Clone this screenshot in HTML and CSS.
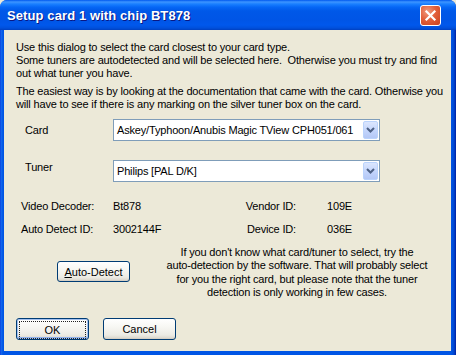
FILE: index.html
```html
<!DOCTYPE html>
<html lang="en">
<head>
  <meta charset="UTF-8" />
  <title>Setup card 1 with chip BT878</title>
  <link rel="stylesheet" href="styles.css">
</head>
<body>

  <div class="window">
    <!-- TITLE BAR -->
    <div class="titlebar">
      <span class="title">Setup card 1 with chip BT878</span>
      <button class="close" title="Close">
        <svg width="13" height="13" viewBox="0 0 13 13">
          <path d="M2.5 2.5 L10.5 10.5 M10.5 2.5 L2.5 10.5" stroke="#fff" stroke-width="2.2" stroke-linecap="square" fill="none"/>
        </svg>
      </button>
    </div>

    <!-- DIALOG BODY -->
    <div class="client">
      <p class="intro">Use this dialog to select the card closest to your card type.<br>Some tuners are autodetected and will be selected here.&nbsp; Otherwise you must try and find<br>out what tuner you have.</p>
      <p class="intro intro-second">The easiest way is by looking at the documentation that came with the card. Otherwise you<br>will have to see if there is any marking on the silver tuner box on the card.</p>

      <div class="field">
        <label class="field-label">Card</label>
        <div class="combo">
          <span class="combo-text">Askey/Typhoon/Anubis Magic TView CPH051/061</span>
          <span class="combo-arrow">
            <svg width="9" height="6" viewBox="0 0 9 6"><path d="M1 1 L4.5 4.5 L8 1" stroke="#4d6185" stroke-width="2" fill="none"/></svg>
          </span>
        </div>
      </div>

      <div class="field field-tuner">
        <label class="field-label">Tuner</label>
        <div class="combo">
          <span class="combo-text">Philips [PAL D/K]</span>
          <span class="combo-arrow">
            <svg width="9" height="6" viewBox="0 0 9 6"><path d="M1 1 L4.5 4.5 L8 1" stroke="#4d6185" stroke-width="2" fill="none"/></svg>
          </span>
        </div>
      </div>

      <div class="info">
        <span>Video Decoder:</span>
        <span>Bt878</span>
        <span class="info-key-right">Vendor ID:</span>
        <span class="info-val-right">109E</span>
        <span>Auto Detect ID:</span>
        <span>3002144F</span>
        <span class="info-key-right">Device ID:</span>
        <span class="info-val-right">036E</span>
      </div>

      <div class="detect">
        <button class="btn btn-detect"><u>A</u>uto-Detect</button>
        <p class="detect-text">If you don't know what card/tuner to select, try the<br>auto-detection by the software. That will probably select<br>for you the right card, but please note that the tuner<br>detection is only working in few cases.</p>
      </div>

      <div class="actions">
        <button class="btn btn-default"><span class="focus">OK</span></button>
        <button class="btn">Cancel</button>
      </div>
    </div>
  </div>

</body>
</html>
```

FILE: styles.css
```css
body {
  margin: 0;
  padding: 0;
  background: #ece9d8;
  font-family: "Liberation Sans", Arial, sans-serif;
  font-size: 11px;
}
.window {
  width: 456px;
  height: 355px;
  display: flex;
  flex-direction: column;
  box-sizing: border-box;
  padding: 0 5px 4px 4px;
  background: linear-gradient(to right, #0831d9 0, #166aee 1px, #0055e5 3px, #0055e5 451px, #0046d0 454px, #001ea0 456px);
  border-radius: 7px 7px 0 0;
  overflow: hidden;
}
.titlebar {
  height: 30px;
  margin: 0 -5px 0 -4px;
  display: flex;
  align-items: center;
  padding: 0 10px 0 7px;
  flex-shrink: 0;
  background: linear-gradient(#0058ee 0, #3d95ff 2px, #1a80ff 4px, #0667f6 7px, #0058e8 11px, #0055e6 20px, #0058ec 25px, #0050dc 28px, #0040c0 30px);
}
.title {
  flex: 1;
  color: #fff;
  font-family: "Liberation Sans", Arial, sans-serif;
  font-weight: bold;
  font-size: 13px;
  text-shadow: 1px 1px 0 #0a1883;
  letter-spacing: 0.1px;
}
.close {
  width: 21px;
  height: 21px;
  padding: 0;
  margin-top: 1px;
  margin-right: 5px;
  display: flex;
  align-items: center;
  justify-content: center;
  border: 1px solid #fff;
  border-radius: 3px;
  background: radial-gradient(circle at 35% 30%, #f09a7e 0, #e2603b 45%, #c9401c 100%);
}
.client {
  flex: 1;
  display: flex;
  flex-direction: column;
  background: #ece9d8;
  padding-top: 11px;
  color: #000;
  letter-spacing: -0.17px;
}
.intro {
  margin: 0;
  padding-left: 12px;
  line-height: 13px;
  white-space: nowrap;
}
.intro-second {
  margin-top: 5px;
}
.field {
  display: flex;
  align-items: flex-start;
  margin-top: 8px;
  padding-left: 21px;
}
.field-tuner {
  margin-top: 19px;
}
.field-label {
  width: 88px;
  line-height: 13px;
  padding-top: 5px;
}
.field-tuner .field-label {
  padding-top: 1px;
}
.combo {
  width: 267px;
  height: 22px;
  box-sizing: border-box;
  border: 1px solid #7f9db9;
  background: #fff;
  display: flex;
  align-items: center;
}
.combo-text {
  flex: 1;
  padding-left: 3px;
  white-space: nowrap;
}
.combo-arrow {
  width: 15px;
  height: 18px;
  margin-right: 1px;
  display: flex;
  align-items: center;
  justify-content: center;
  border: 1px solid #bad3fc;
  border-radius: 2px;
  background: linear-gradient(#dbe6fe, #c1d3fb 60%, #b4c8f6);
  box-sizing: border-box;
}
.info {
  display: grid;
  grid-template-columns: 92px 80px 103px auto;
  row-gap: 10px;
  margin-top: 18px;
  padding-left: 17px;
  line-height: 13px;
}
.info-key-right {
  text-align: right;
}
.info-val-right {
  padding-left: 31px;
}
.detect {
  display: flex;
  align-items: flex-start;
  margin-top: 10px;
  padding-left: 53px;
}
.detect-text {
  margin: 0 0 0 27px;
  width: 280px;
  text-align: center;
  line-height: 13.3px;
  white-space: nowrap;
}
.btn {
  width: 73px;
  height: 22px;
  padding: 0;
  font-family: "Liberation Sans", Arial, sans-serif;
  font-size: 11px;
  color: #000;
  border: 1px solid #003c74;
  border-radius: 3px;
  background: linear-gradient(#ffffff 0, #f7f7f3 40%, #ecebe4 80%, #d8d3c8 100%);
  box-shadow: inset 0 -1px 0 #d6d0c5;
}
.btn-detect {
  margin-top: 15px;
  height: 21px;
}
.actions {
  display: flex;
  gap: 14px;
  margin-top: auto;
  margin-bottom: 11px;
  padding-left: 12px;
}
.btn-default {
  box-shadow: inset 0 0 0 1px #a4c1f0, inset 0 -2px 0 #8fb0eb;
  position: relative;
}
.focus {
  display: flex;
  align-items: center;
  justify-content: center;
  margin: 2px;
  height: 16px;
  border: 1px dotted #222;
}
```
